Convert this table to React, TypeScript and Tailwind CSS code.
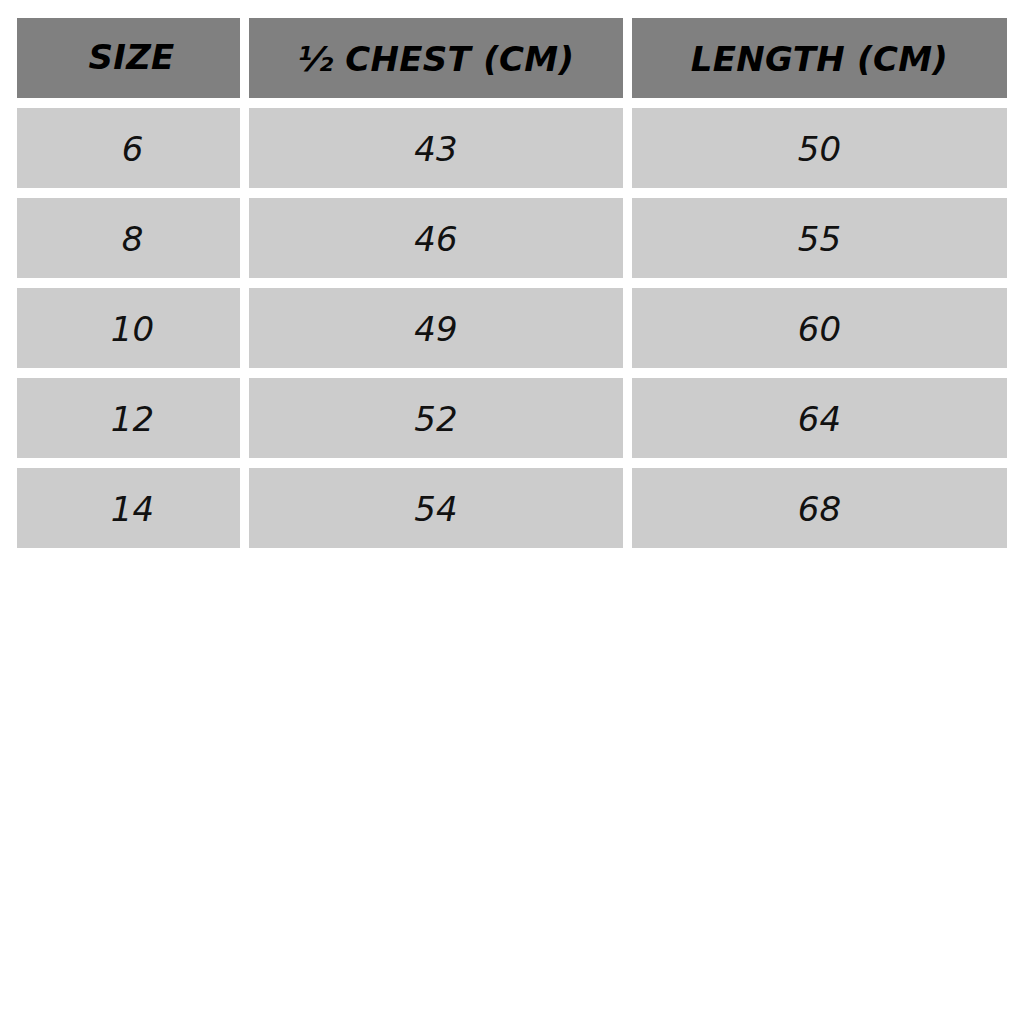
const header = ["SIZE", "½ CHEST (CM)", "LENGTH (CM)"];

const rows = [
  ["6", "43", "50"],
  ["8", "46", "55"],
  ["10", "49", "60"],
  ["12", "52", "64"],
  ["14", "54", "68"],
];

export default function App() {
  return (
    <div
      className="w-[1023px] h-[1023px] bg-white pl-[17px] pt-[18px]"
      style={{ fontFamily: '"DejaVu Sans", Verdana, sans-serif' }}
    >
      <div className="grid grid-cols-[223px_374px_375px] auto-rows-[80px] gap-x-[9px] gap-y-[10px]">
        {header.map((h, i) => (
          <div
            key={h}
            className={
              "flex items-center justify-center bg-[#808080] text-[34px] font-bold italic tracking-[0.3px] text-black " +
              (i === 0 ? "pl-[6px] pb-[2px]" : "pt-[2px]")
            }
          >
            {h}
          </div>
        ))}
        {rows.map((r) =>
          r.map((v, i) => (
            <div
              key={r[0] + "-" + i}
              className={
                "flex items-center justify-center bg-[#cccccc] text-[34px] italic text-[#111] pt-[3px] " +
                (i === 0 ? "pl-[8px]" : "")
              }
            >
              {v}
            </div>
          ))
        )}
      </div>
    </div>
  );
}
